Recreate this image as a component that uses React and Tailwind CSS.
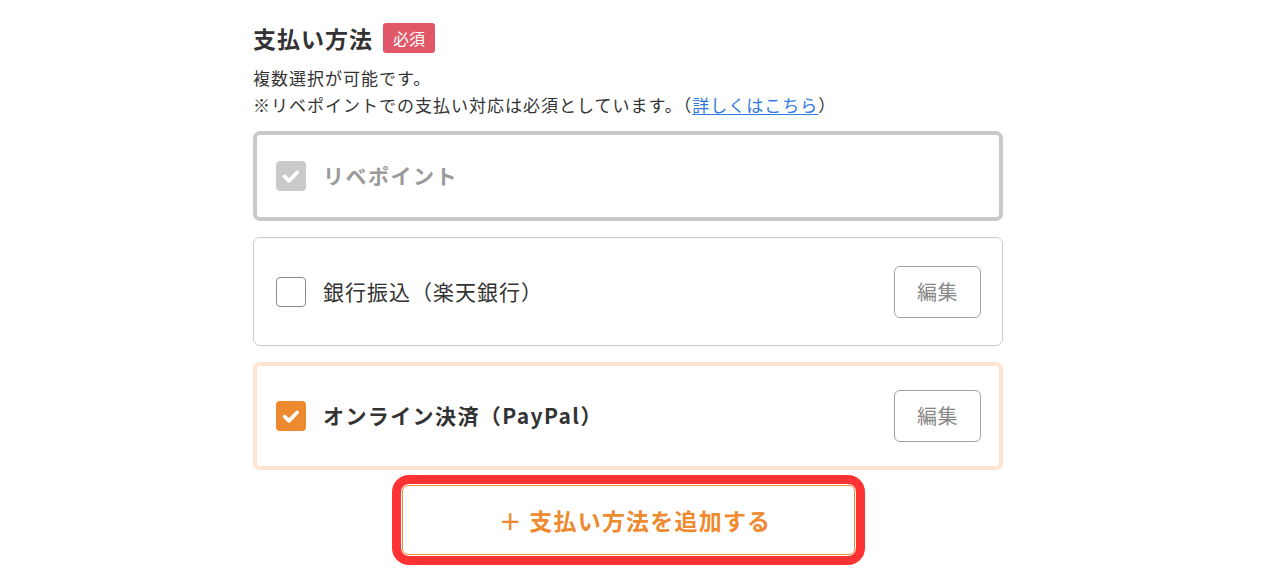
import React from 'react';

const Check = ({ className }) => (
  <svg viewBox="0 0 24 24" className={className} fill="none" stroke="currentColor" strokeWidth="4" strokeLinecap="round" strokeLinejoin="round">
    <path d="M5 12.5l4.8 4.8 9-9.3" />
  </svg>
);

const EditButton = () => (
  <button className="w-[87px] h-[52px] rounded-[6px] border border-[#a3a3a3] text-[20px] tracking-[0.5px] text-[#888] bg-white">
    編集
  </button>
);

const App = () => {
  return (
    <div className="w-[1270px] h-[576px] bg-white overflow-hidden font-['Noto_Sans_CJK_JP','Noto_Sans',sans-serif] text-[#333]">
      <div className="w-[750px] ml-[253px] pt-[22px]">
        <div className="flex items-center gap-[10px]">
          <h2 className="text-[23px] tracking-[1px] font-bold leading-[32px] text-[#333]">支払い方法</h2>
          <span className="h-[30px] px-[10px] flex items-center rounded-[3px] bg-[#e05767] text-white text-[16px]">必須</span>
        </div>
        <p className="mt-[10px] text-[17px] tracking-[1px] leading-[27px]">複数選択が可能です。</p>
        <p className="text-[17px] tracking-[1px] leading-[27px]">
          ※リベポイントでの支払い対応は必須としています。（<a href="#" className="text-[#2f7ae0] underline underline-offset-2">詳しくはこちら</a>）
        </p>

        <div className="mt-[13px] flex flex-col gap-[16px]">
          <div className="h-[90px] rounded-[7px] border-[4px] border-[#c9c9c9] flex items-center px-[19px]">
            <span className="w-[30px] h-[30px] rounded-[4px] bg-[#cacaca] flex items-center justify-center text-white">
              <Check className="w-[22px] h-[22px]" />
            </span>
            <span className="ml-[17px] text-[21px] tracking-[1.5px] font-bold text-[#9a9a9a]">リベポイント</span>
          </div>

          <div className="h-[109px] rounded-[7px] border border-[#c9c9c9] flex items-center pl-[22px] pr-[21px]">
            <span className="w-[30px] h-[30px] rounded-[4px] border border-[#8a8a8a] bg-white" />
            <span className="ml-[17px] text-[21px] tracking-[1px] text-[#333]">銀行振込（楽天銀行）</span>
            <span className="ml-auto"><EditButton /></span>
          </div>

          <div className="h-[108px] rounded-[7px] border-[4px] border-[#fde6d1] flex items-center pl-[19px] pr-[18px]">
            <span className="w-[30px] h-[30px] rounded-[4px] bg-[#ed8a2f] flex items-center justify-center text-white">
              <Check className="w-[22px] h-[22px]" />
            </span>
            <span className="ml-[17px] text-[21px] tracking-[1.4px] font-bold text-[#333]">オンライン決済（PayPal）</span>
            <span className="ml-auto"><EditButton /></span>
          </div>
        </div>

        <div className="mt-[5px] flex justify-center">
          <div className="w-[473px] h-[90px] rounded-[17px] border-[9px] border-[#ff3333] p-[1px]">
            <button className="w-full h-full pl-[14px] rounded-[6px] border-[1.5px] border-[#ee8d3a] bg-white flex items-center justify-center text-[23px] tracking-[1.2px] font-bold text-[#ee8a2f]">
              ＋ 支払い方法を追加する
            </button>
          </div>
        </div>
      </div>
    </div>
  );
};

export default App;
